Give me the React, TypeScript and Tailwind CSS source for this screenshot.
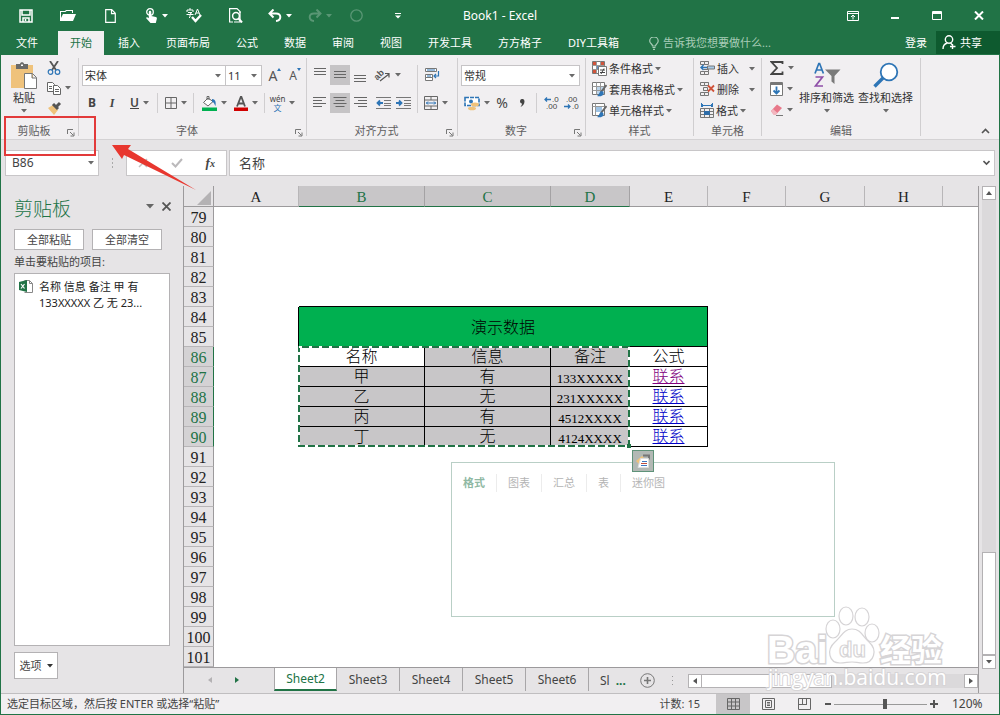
import { useState } from "react";
import type { ReactNode } from "react";

const menuTabs = ["文件", "开始", "插入", "页面布局", "公式", "数据", "审阅", "视图", "开发工具", "方方格子", "DIY工具箱"];
const sheets = ["Sheet2", "Sheet3", "Sheet4", "Sheet5", "Sheet6"];
const columns = ["A", "B", "C", "D", "E", "F", "G", "H", ""];

interface Record {
  name: string;
  info: string;
  remark: string;
  link: string;
}

const records: Record[] = [
  { name: "名称", info: "信息", remark: "备注", link: "公式" },
  { name: "甲", info: "有", remark: "133XXXXX", link: "联系" },
  { name: "乙", info: "无", remark: "231XXXXX", link: "联系" },
  { name: "丙", info: "有", remark: "4512XXXX", link: "联系" },
  { name: "丁", info: "无", remark: "4124XXXX", link: "联系" },
];

const FIRST_ROW = 79;
const LAST_ROW = 101;
const TITLE_ROW = 84;
const DATA_ROW = 86;

function Caret({ className = "text-[#6a6a6a]" }: { className?: string }) {
  return (
    <svg width="6" height="4" viewBox="0 0 6 4" className={`shrink-0 ${className}`}>
      <path d="M0 0h6L3 3.5z" fill="currentColor" />
    </svg>
  );
}

function Separator() {
  return <span className="w-px h-5 bg-[#d0ced0] shrink-0" />;
}

interface ToolProps {
  label: string;
  children: ReactNode;
  caret?: boolean;
  active?: boolean;
  width?: string;
  className?: string;
}

function Tool({ label, children, caret, active, width = caret ? "w-[35px]" : "w-5", className = "" }: ToolProps) {
  return (
    <button
      type="button"
      aria-label={label}
      className={`min-h-5 flex items-center justify-center gap-1 shrink-0 ${width} ${active ? "bg-[#c6c4c6]" : ""} ${className}`}
    >
      {children}
      {caret && <Caret />}
    </button>
  );
}

function Group({ title, launcher, className, children }: { title: string; launcher?: boolean; className: string; children: ReactNode }) {
  return (
    <section className={`flex flex-col shrink-0 border-r border-[#d0ced0] ${className}`}>
      <div className="flex-1 min-h-0">{children}</div>
      <div className="h-[15px] pt-1 flex items-center text-[#605e60]">
        <span className="flex-1 text-center">{title}</span>
        {launcher && (
          <button type="button" aria-label={`${title}设置`} className="w-[11px] flex justify-start pt-1">
            <svg width="8" height="8" viewBox="0 0 8 8" fill="none" stroke="#777">
              <path d="M.5 5V.5H6M3 3l3.5 3.5M7 3.5V7H3.5" />
            </svg>
          </button>
        )}
      </div>
    </section>
  );
}

function RibbonSelect({ label, value, className }: { label: string; value: string; className: string }) {
  return (
    <div className={`h-[21px] flex items-center bg-white border border-[#c6c4c6] pr-1 ${className}`}>
      <select aria-label={label} className="appearance-none flex-1 min-w-0 pl-[2px] bg-transparent outline-none text-[#333]">
        <option>{value}</option>
      </select>
      <Caret />
    </div>
  );
}

// horizontal text lines, one width per line
function Lines({ widths, align = "center", top = 3 }: { widths: number[]; align?: "left" | "center" | "right"; top?: number }) {
  return (
    <svg width="14" height="14" viewBox="0 0 14 14" stroke="#666">
      {widths.map((w, i) => {
        const x = align === "left" ? 0 : align === "right" ? 14 - w : (14 - w) / 2;
        return <path key={i} d={`M${x} ${top + i * 3 + 0.5}h${w}`} />;
      })}
    </svg>
  );
}

function IndentIcon({ right }: { right?: boolean }) {
  return (
    <svg width="15" height="12" viewBox="0 0 15 12" fill="none">
      <path d="M0 .5h15M8 3.5h7M8 6.5h7M8 8.5h7M0 11.5h15" stroke="#777" />
      {right ? <path d="M0 6h5M3 3.5L5.5 6 3 8.5" stroke="#2e75b6" strokeWidth="1.8" /> : <path d="M1 6h6M4 3.5L1.500 6 4 8.500" stroke="#2e75b6" strokeWidth="1.8" />}
    </svg>
  );
}

function DecimalIcon({ less }: { less?: boolean }) {
  return (
    <svg width="15" height="14" viewBox="0 0 15 14" fontFamily="Liberation Sans" fontSize="8" fill="#444">
      <text x={less ? 2 : 8} y="6">{less ? ".00" : ".0"}</text>
      <text x={less ? 8 : 2} y="13">{less ? ".0" : ".00"}</text>
      {less ? (
        <path d="M0 10.500h6M4 8.500l2 2-2 2" fill="none" stroke="#2e75b6" strokeWidth="1.300" />
      ) : (
        <path d="M7 3.500H1M3 1.500l-2 2 2 2" fill="none" stroke="#2e75b6" strokeWidth="1.300" />
      )}
    </svg>
  );
}

function StyleIcon({ kind }: { kind: "cond" | "table" | "cell" }) {
  return (
    <svg width="15" height="15" viewBox="0 0 15 15" fill="none">
      <path d="M.5.500h12v12H.5z" fill="#fff" stroke="#777" />
      {kind === "cond" && <path d="M1 1h4v3H1zM1 8h3v4H1zM8 1h4v3H8z" fill="#d0533a" />}
      {kind === "cond" && <path d="M5 4h3v4H5z" fill="#5b8fc9" />}
      {kind === "table" && <path d="M4 4h8v8H4z" fill="#bcd4ea" />}
      {kind === "cell" && <path d="M3 3h7v6H3z" fill="#9fc3e4" />}
      {kind === "cell" ? <path d="M.5 3.500h12M3.500.500v12" stroke="#999" /> : <path d="M4.500.500v12M8.500.500v12M.5 4.500h12M.5 8.500h12" stroke="#999" />}
      {kind === "cond" ? (
        <>
          <path d="M6.500 5.500h8v9h-8z" fill="#fff" stroke="#777" />
          <path d="M8 9h5M8 11.500h5M12 7.500L9 13" stroke="#444" />
        </>
      ) : (
        <>
          <path d="M14.500 3L9 10" stroke="#666" strokeWidth="2" />
          <path d="M10 9c-3 0-2 3-5 5 3 1 7 0 6.500-3.500z" fill="#2e75b6" />
        </>
      )}
    </svg>
  );
}

function CellIcon({ kind }: { kind: "insert" | "delete" | "format" }) {
  if (kind === "format") {
    return (
      <svg width="14" height="15" viewBox="0 0 14 15" fill="none">
        <path d="M1 2.500h12M1.500 0v4M12.500 0v4M3 1L1.500 2.500 3 4M11 1l1.500 1.500L11 4" stroke="#2e75b6" />
        <path d="M.5 5.500h13v9H.5zM4.500 5v9M9.500 5v9M.5 8.500h13M.5 11.500h13" stroke="#777" />
        <path d="M4 8h6v4H4z" fill="#2e6ca8" />
      </svg>
    );
  }
  return (
    <svg width="15" height="15" viewBox="0 0 15 15" fill="none">
      <path d="M.5.500h4v3h-4zM4.500.500h4v3h-4zM.5 10.500h4v3h-4zM4.500 10.500h4v3h-4zM8.500.500V3M3.500 8.500h5v2" stroke="#777" />
      {kind === "insert" ? (
        <>
          <path d="M7.500 5h7v3h-7z" fill="#a9cbe8" stroke="#777" />
          <path d="M7 6.500H1M3.500 4L1 6.500 3.500 9" stroke="#2e75b6" strokeWidth="1.500" />
        </>
      ) : (
        <>
          <path d="M3.500 5.500h4v3h-4z" stroke="#777" />
          <path d="M8 3.500l6 6M14 3.500l-6 6" stroke="#d0533a" strokeWidth="1.800" />
        </>
      )}
    </svg>
  );
}

function TextTool({ icon, label, wide }: { icon: ReactNode; label: string; wide?: boolean }) {
  return (
    <button type="button" className="h-[21px] flex items-center gap-[2px] text-[#333]">
      {icon}
      <span className={`text-left ${wide ? "w-[30px]" : ""}`}>{label}</span>
      <Caret />
    </button>
  );
}

function TitleBar() {
  return (
    <header className="h-[31px] grid grid-cols-[1fr_auto_1fr] items-center bg-[#217346] text-white">
      <div className="flex items-center pl-[5px] [&>button]:h-[30px] [&>button]:w-[42px] [&>button]:flex [&>button]:items-center [&>button]:justify-center [&>button]:gap-1">
        <button type="button" aria-label="保存">
          <svg width="14" height="14" viewBox="0 0 14 14" fill="none" stroke="#fff" strokeWidth="1.500">
            <path d="M1 1h12v12H1z" />
            <path d="M3 1v5h8V1" />
            <path d="M4 13V9h6v4M6.500 10v2" />
          </svg>
        </button>
        <button type="button" aria-label="打开">
          <svg width="16" height="13" viewBox="0 0 16 13" fill="#fff">
            <path d="M0 11V2h5l1-1h7v3h-1V2H6.500l-1 1H1v6l2-4h13l-3 7H0z" />
          </svg>
        </button>
        <button type="button" aria-label="新建">
          <svg width="11" height="14" viewBox="0 0 11 14" fill="none" stroke="#fff" strokeWidth="1.200">
            <path d="M.7.700h6l3.600 3.600v9H.7zM6.500.700v4h4" />
          </svg>
        </button>
        <button type="button" aria-label="触摸/鼠标模式" className="pl-2">
          <svg width="13" height="15" viewBox="0 0 13 15" fill="none">
            <circle cx="5" cy="4" r="3.300" stroke="#fff" strokeWidth="1.300" />
            <path d="M3.800 4c0-1.600 2.500-1.600 2.500 0v4l4.500 1c1 .300 1.300 1 1 2l-1 4H5.500L1 10c.5-1 1.500-1 2.800.300z" fill="#fff" />
          </svg>
          <Caret className="text-white" />
        </button>
        <button type="button" aria-label="拼写检查">
          <svg width="16" height="15" viewBox="0 0 16 15" fill="none">
            <path d="M4 0v2M1 4V2h6v2M2 4.500h4L4 6v3M.5 6.500h7M3 9.500h1" stroke="#fff" />
            <path d="M9 7l2.500-6L14 7M10 5h3" stroke="#fff" />
            <path d="M6 9l3.500 4L15 7" stroke="#fff" strokeWidth="2.400" />
          </svg>
        </button>
        <button type="button" aria-label="打印预览">
          <svg width="14" height="15" viewBox="0 0 14 15" fill="none" stroke="#fff" strokeWidth="1.200">
            <path d="M4 14H.6V.600H8L11 3.500V5" />
            <circle cx="7" cy="8" r="3.400" strokeWidth="1.500" />
            <path d="M9.500 10.500L13 14.500" strokeWidth="2" />
            <path d="M11 3.500V14H5" />
          </svg>
        </button>
        <button type="button" aria-label="撤消" className="pl-1">
          <svg width="14" height="13" viewBox="0 0 14 13" fill="none" stroke="#fff" strokeWidth="2">
            <path d="M5.500.500L1.500 4.500l4 4M2 4.500h6c6 0 5.500 7 0 7.500" />
          </svg>
          <Caret className="text-white" />
        </button>
        <button type="button" aria-label="恢复" className="opacity-25">
          <svg width="14" height="13" viewBox="0 0 14 13" fill="none" stroke="#fff" strokeWidth="2">
            <path d="M8.500.500l4 4-4 4M12 4.500H6c-6 0-5.500 7 0 7.500" />
          </svg>
          <Caret className="text-white" />
        </button>
        <button type="button" aria-label="录制" className="opacity-25 pr-3">
          <svg width="13" height="13" viewBox="0 0 13 13" fill="none" stroke="#fff" strokeWidth="1.300">
            <circle cx="6.500" cy="6.500" r="5.700" />
          </svg>
        </button>
        <button type="button" aria-label="自定义快速访问工具栏" className="pr-3">
          <svg width="6" height="6" viewBox="0 0 6 6" fill="#fff">
            <path d="M0 0h6v1H0zM0 2.500h6L3 5.500z" />
          </svg>
        </button>
      </div>
      <h1 className="text-[12px] leading-4">Book1 - Excel</h1>
      <div className="flex justify-end [&>button]:w-[42px] [&>button]:h-[30px] [&>button]:flex [&>button]:items-center [&>button]:justify-center">
        <button type="button" aria-label="功能区显示选项">
          <svg width="12" height="10" viewBox="0 0 12 10" fill="none" stroke="#fff">
            <path d="M.5.500h11v9H.5zM.5 2.500h11M6 8.500V4.500M4 6l2-2 2 2" />
          </svg>
        </button>
        <button type="button" aria-label="最小化">
          <svg width="8" height="10" viewBox="0 0 8 10"><path d="M0 6h8v2H0z" fill="#fff" /></svg>
        </button>
        <button type="button" aria-label="最大化">
          <svg width="10" height="9" viewBox="0 0 10 9" fill="none" stroke="#fff"><path d="M.5.500h9v8h-9zM0 1.500h10M0 2.500h10" /></svg>
        </button>
        <button type="button" aria-label="关闭">
          <svg width="10" height="9" viewBox="0 0 10 9" stroke="#fff" strokeWidth="2"><path d="M1 .5l8 8M9 .5l-8 8" /></svg>
        </button>
      </div>
    </header>
  );
}

function MenuBar() {
  const [tab, setTab] = useState<string>("开始");
  return (
    <nav className="h-6 flex items-stretch bg-[#217346] text-white pl-1">
      <div className="flex gap-[2px]">
        {menuTabs.map((name) => (
          <button
            key={name}
            type="button"
            onClick={() => setTab(name)}
            className={`px-3 pb-px whitespace-nowrap first:mr-[6px] ${tab === name ? "bg-[#f1eff1] text-[#217346]" : ""}`}
          >
            {name}
          </button>
        ))}
      </div>
      <label className="flex items-center gap-1 pl-[18px] flex-1 min-w-0 text-[#a9cdb8]">
        <svg width="10" height="13" viewBox="0 0 10 13" fill="none" stroke="currentColor" strokeWidth="1.200">
          <path d="M3.500 9c0-2-2.800-2.500-2.800-5a4.200 4 0 0 1 8.500 0c0 2.500-2.700 3-2.700 5zM3.500 10.500h3M4 12.400h2" />
        </svg>
        <input aria-label="告诉我" placeholder="告诉我您想要做什么..." className="flex-1 min-w-0 bg-transparent outline-none placeholder:text-[#a9cdb8] placeholder:opacity-100" />
      </label>
      <button type="button" className="px-[9px] pb-px">登录</button>
      <button type="button" className="w-[64px] h-[23px] flex items-center gap-1 pl-[6px] bg-[#0e5a2f]">
        <svg width="14" height="15" viewBox="0 0 14 15" fill="none" stroke="#fff" strokeWidth="1.400">
          <circle cx="7" cy="4.500" r="3.700" />
          <path d="M1 14c0-4 2-5.500 4.500-6M8.500 8l1.500 1.500M10.500 9v5M8 11.500h5.500" />
        </svg>
        共享
      </button>
    </nav>
  );
}

function Ribbon() {
  return (
    <div className="h-[85px] py-[3px] flex bg-[#f1eff1] border-b border-[#d4d2d4]">
      <Group title="剪贴板" launcher className="w-[78px]">
        <div className="flex pl-2">
          <button type="button" className="w-[30px] flex flex-col items-center pt-1 text-[#333]">
            <svg width="28" height="28" viewBox="0 0 28 28" className="shrink-0">
              <path d="M1 3h22v23H1z" fill="#efc27b" />
              <path d="M6 2h4c0-2.500 4-2.500 4 0h4v5H6z" fill="#6a6a6a" />
              <path d="M11 2.500h2v1.500h-2z" fill="#fff" />
              <path d="M14.500 11.500h8l4 4v11h-12zM22 11.500V16h4.500" fill="#fff" stroke="#777" />
            </svg>
            <span className="leading-4 whitespace-nowrap">粘贴</span>
            <span className="pt-[3px]"><Caret /></span>
          </button>
          <div className="flex flex-col pl-[5px]">
            <Tool label="剪切">
              <svg width="14" height="14" viewBox="0 0 14 14" fill="none">
                <path d="M3 0l6 9M11 0L5 9" stroke="#555" strokeWidth="1.800" />
                <circle cx="3.500" cy="11" r="2.300" stroke="#2e75b6" strokeWidth="1.200" />
                <circle cx="10.500" cy="11" r="2.300" stroke="#2e75b6" strokeWidth="1.200" />
              </svg>
            </Tool>
            <Tool label="复制" caret width="w-[30px]">
              <svg width="14" height="13" viewBox="0 0 14 13" fill="#fff" stroke="#666" className="shrink-0">
                <path d="M.5.500h5l2 2v7h-7zM2 4.500h3M2 6.500h3" />
                <path d="M6.500 3.500h4l3 3v6h-7zM8 7.500h4M8 9.500h4" />
              </svg>
            </Tool>
            <Tool label="格式刷">
              <svg width="15" height="14" viewBox="0 0 15 14">
                <path d="M1 7l5-3 5 5-4 5z" fill="#efc27b" />
                <path d="M6 3l5 5M9 6l4-4" stroke="#555" strokeWidth="3" />
              </svg>
            </Tool>
          </div>
        </div>
      </Group>

      <Group title="字体" launcher className="w-[228px]">
        <div className="flex flex-col gap-[7px] pt-[7px] pl-[3px]">
          <div className="flex items-center">
            <RibbonSelect label="字体" value="宋体" className="w-[144px]" />
            <RibbonSelect label="字号" value="11" className="w-[37px] -ml-px" />
            <Tool label="增大字号" className="ml-[3px]">
              <span className="text-[14px] leading-5 text-[#555]">A</span>
              <svg width="4" height="3" viewBox="0 0 4 3" className="-ml-1 mb-3"><path d="M0 3h4L2 0z" fill="#2e75b6" /></svg>
            </Tool>
            <Tool label="减小字号">
              <span className="text-[12px] leading-5 text-[#555]">A</span>
              <svg width="4" height="3" viewBox="0 0 4 3" className="-ml-1 mb-3"><path d="M0 0h4L2 3z" fill="#2e75b6" /></svg>
            </Tool>
          </div>
          <div className="flex items-center text-[12px] text-[#444]">
            <Tool label="加粗"><b>B</b></Tool>
            <Tool label="倾斜"><i className="font-['Liberation_Serif',serif] font-bold">I</i></Tool>
            <Tool label="下划线" caret><span className="underline font-semibold">U</span></Tool>
            <Separator />
            <Tool label="边框" caret>
              <svg width="12" height="12" viewBox="0 0 12 12" fill="none" stroke="#666"><path d="M.5.500h11v11H.5zM6 0v12M0 6h12" /></svg>
            </Tool>
            <Separator />
            <Tool label="填充颜色" caret className="ml-[3px]">
              <svg width="15" height="15" viewBox="0 0 15 15" fill="none">
                <path d="M6 2L1.500 6.500 6 10l5-4.500zM5 4V.500h2V4" fill="#fff" stroke="#666" />
                <path d="M10 3c4 0 4 4 3.500 7-1-1-1-4-3.500-4z" fill="#2e75b6" />
                <path d="M0 11.500h15V15H0z" fill="#00b050" />
              </svg>
            </Tool>
            <Tool label="字体颜色" caret width="w-7">
              <svg width="14" height="15" viewBox="0 0 14 15" fill="none">
                <path d="M3 10.500L6.800 1h.6L11 10.500M4.500 7.500h5" stroke="#555" strokeWidth="1.800" />
                <path d="M0 11.500h14V15H0z" fill="#d00000" />
              </svg>
            </Tool>
            <span className="pl-1"><span className="block w-px h-5 bg-[#d0ced0]" /></span>
            <Tool label="拼音" caret>
              <span className="flex flex-col items-center text-[8px] leading-[9px]">
                <span>wén</span>
                <span className="text-[#2e75b6]">文</span>
              </span>
            </Tool>
          </div>
        </div>
      </Group>

      <Group title="对齐方式" launcher className="w-[151px]">
        <div className="flex pt-[7px] pl-[3px]">
          <div className="flex flex-col gap-2 pr-1 shrink-0">
            <div className="flex items-center">
              <Tool label="顶端对齐"><Lines widths={[12, 12, 12]} top={0} /></Tool>
              <Tool label="垂直居中" active><Lines widths={[12, 12, 12]} /></Tool>
              <Tool label="底端对齐"><Lines widths={[12, 12, 12]} top={7} /></Tool>
              <Tool label="方向" caret>
                <svg width="16" height="16" viewBox="0 0 16 16" fill="none" className="overflow-visible">
                  <text x="-1" y="10" fontSize="9" fontFamily="Liberation Sans" fontWeight="bold" fill="#555" transform="rotate(-45 5 8)">ab</text>
                  <path d="M5 14l9-7M10 6.500h4v4" stroke="#555" strokeWidth="1.200" />
                </svg>
              </Tool>
            </div>
            <div className="flex items-center">
              <Tool label="左对齐"><Lines widths={[13, 9, 13, 9]} align="left" top={1} /></Tool>
              <Tool label="居中" active><Lines widths={[13, 9, 13, 9]} top={1} /></Tool>
              <Tool label="右对齐"><Lines widths={[13, 9, 13, 9]} align="right" top={1} /></Tool>
              <Tool label="减少缩进量" className="ml-[3px]"><IndentIcon /></Tool>
              <Tool label="增加缩进量"><IndentIcon right /></Tool>
            </div>
          </div>
          <span className="w-px h-12 shrink-0 bg-[#d0ced0]" />
          <div className="flex flex-col gap-2 pl-1">
            <Tool label="自动换行">
              <svg width="15" height="14" viewBox="0 0 15 14" fill="none">
                <path d="M.5.500h11v3H.5zM.5 6.500h7v3h-7zM.5 9.500h7v3h-7z" fill="#fff" stroke="#777" />
                <path d="M2 2h8M2 8h4" stroke="#2e75b6" />
                <path d="M13.500 3v5H9M11 6L9 8l2 2" stroke="#2e75b6" strokeWidth="1.200" />
              </svg>
            </Tool>
            <Tool label="合并后居中" caret width="w-7">
              <svg width="14" height="14" viewBox="0 0 14 14" fill="none">
                <path d="M.5.500h13v13H.5zM.5 4h13M.5 10h13M7 .500V4M7 10v3.500" stroke="#666" />
                <path d="M2 7h10M4 5.500L2.500 7 4 8.500M10 5.500L11.500 7 10 8.500" stroke="#2e75b6" />
              </svg>
            </Tool>
          </div>
        </div>
      </Group>

      <Group title="数字" launcher className="w-[128px]">
        <div className="flex flex-col gap-[7px] pt-[7px] pl-[3px]">
          <RibbonSelect label="数字格式" value="常规" className="w-[119px]" />
          <div className="flex items-center text-[#444]">
            <Tool label="会计数字格式" caret width="w-[31px]">
              <svg width="16" height="15" viewBox="0 0 16 15" fill="none">
                <path d="M1 1.500h14v8H1z" fill="#fff" stroke="#2e75b6" strokeWidth="1.600" strokeDasharray="4 1" />
                <circle cx="7" cy="5.500" r="2" fill="#2e75b6" />
                <ellipse cx="11" cy="8.500" rx="4" ry="2" fill="#efc27b" />
                <ellipse cx="8" cy="12.500" rx="4" ry="1.800" fill="#efc27b" />
              </svg>
            </Tool>
            <Tool label="百分比样式"><span className="text-[14px] leading-5">%</span></Tool>
            <Tool label="千位分隔样式">
              <svg width="5" height="8" viewBox="0 0 5 8"><path d="M0 2.200a2 2 0 1 1 4.500 0C4.500 5 3 7 .5 8c1-1.500 1.500-2.500 1.400-3.600C.6 4.300 0 3.300 0 2.200z" fill="#444" /></svg>
            </Tool>
            <span className="px-1"><span className="block w-px h-5 bg-[#d0ced0]" /></span>
            <Tool label="增加小数位数"><DecimalIcon /></Tool>
            <Tool label="减少小数位数"><DecimalIcon less /></Tool>
          </div>
        </div>
      </Group>

      <Group title="样式" className="w-[108px]">
        <div className="flex flex-col items-start pl-[6px]">
          <TextTool icon={<StyleIcon kind="cond" />} label="条件格式" />
          <TextTool icon={<StyleIcon kind="table" />} label="套用表格格式" />
          <TextTool icon={<StyleIcon kind="cell" />} label="单元格样式" />
        </div>
      </Group>

      <Group title="单元格" className="w-[68px]">
        <div className="flex flex-col items-start pl-[6px]">
          <TextTool icon={<CellIcon kind="insert" />} label="插入" wide />
          <TextTool icon={<CellIcon kind="delete" />} label="删除" wide />
          <TextTool icon={<CellIcon kind="format" />} label="格式" />
        </div>
      </Group>

      <Group title="编辑" className="w-[159px]">
        <div className="flex text-[#333]">
          <div className="flex flex-col gap-px pl-1 shrink-0">
            <Tool label="自动求和" caret width="w-[31px]">
              <svg width="14" height="14" viewBox="0 0 14 14" fill="none"><path d="M12.500 3V1H1.500l5.500 6-5.500 6h11v-2.500" stroke="#444" strokeWidth="1.800" /></svg>
            </Tool>
            <Tool label="填充" caret width="w-[31px]">
              <svg width="13" height="14" viewBox="0 0 13 14" fill="none">
                <path d="M.5.500h12v13H.5z" fill="#fff" stroke="#777" />
                <path d="M1 1h11v2H1z" fill="#777" />
                <path d="M6.500 4.500v7M3.500 8.500l3 3 3-3" stroke="#2e75b6" strokeWidth="1.800" />
              </svg>
            </Tool>
            <Tool label="清除" caret width="w-[31px]">
              <svg width="13" height="12" viewBox="0 0 13 12">
                <path d="M1 7l6-6.500L12 4l-6 6.500H3.500z" fill="#e8788a" />
                <path d="M1 7l2-2 4.500 4L6 10.500H3.500z" fill="#f3b6bf" />
                <path d="M6 11.500h7" stroke="#777" />
              </svg>
            </Tool>
          </div>
          <button type="button" className="w-[59px] flex flex-col items-center pt-1">
            <svg width="28" height="28" viewBox="0 0 28 28" fill="none">
              <path d="M2 11.500L5.800 1.500h.8l3.800 10M3.500 8h5.500" stroke="#2e75b6" strokeWidth="1.700" />
              <path d="M2.500 15h7l-7 9h7.500" stroke="#8e4fa8" strokeWidth="1.700" />
              <path d="M12 7.500h15.500l-6 6.500v8l-3-2.500V14z" fill="#7a7a7a" />
            </svg>
            <span className="leading-4 whitespace-nowrap">排序和筛选</span>
            <span className="pt-[3px]"><Caret /></span>
          </button>
          <button type="button" className="w-[59px] flex flex-col items-center pt-1">
            <svg width="28" height="28" viewBox="0 0 28 28" fill="none">
              <circle cx="17" cy="10" r="8.300" fill="#fff" stroke="#2e75b6" strokeWidth="1.800" />
              <path d="M11 16L2.500 24.500" stroke="#2e75b6" strokeWidth="3.400" />
            </svg>
            <span className="leading-4 whitespace-nowrap">查找和选择</span>
            <span className="pt-[3px]"><Caret /></span>
          </button>
        </div>
      </Group>

      <div className="flex-1 flex items-end justify-end pr-[9px]">
        <button type="button" aria-label="折叠功能区">
          <svg width="9" height="8" viewBox="0 0 9 8" fill="none" stroke="#555" strokeWidth="1.600"><path d="M1 5l3.500-3.500L8 5" /></svg>
        </button>
      </div>
    </div>
  );
}

function FormulaBar() {
  return (
    <div className="h-[46px] flex items-start pt-[10px] pl-1 pr-1 text-[#444]">
      <div className="w-[94px] h-[26px] flex items-center pr-1 bg-white border border-[#c8c6c8]">
        <input aria-label="名称框" defaultValue="B86" className="flex-1 min-w-0 pl-[6px] text-[12px] bg-transparent outline-none" />
        <Caret />
      </div>
      <svg width="27" height="26" viewBox="0 0 27 26" fill="#aaa"><path d="M13 8h1v2h-1zM13 12h1v2h-1zM13 16h1v2h-1z" /></svg>
      <div className="w-[101px] h-[26px] flex items-center justify-around bg-white border border-[#c8c6c8]">
        <button type="button" aria-label="取消">
          <svg width="11" height="10" viewBox="0 0 11 10" stroke="#c0bec0" strokeWidth="1.500"><path d="M1 1l8 8M9 1L1 9" /></svg>
        </button>
        <button type="button" aria-label="输入">
          <svg width="12" height="10" viewBox="0 0 12 10" fill="none" stroke="#bbb9bb" strokeWidth="2"><path d="M1 5l3.500 3.500L11 1" /></svg>
        </button>
        <button type="button" aria-label="插入函数" className="font-['Liberation_Serif',serif] italic font-bold text-[13px]">
          f<span className="text-[10px]">x</span>
        </button>
      </div>
      <div className="ml-[2px] flex-1 h-[26px] flex items-center pr-1 bg-white border border-[#c8c6c8]">
        <input aria-label="编辑栏" defaultValue="名称" className="flex-1 min-w-0 pl-[9px] text-[13px] bg-transparent outline-none" />
        <svg width="7" height="6" viewBox="0 0 7 6" fill="none" stroke="#555" strokeWidth="1.600"><path d="M.5 1l3 3 3-3" /></svg>
      </div>
    </div>
  );
}

function ClipboardPane() {
  return (
    <aside className="w-[182px] shrink-0 flex flex-col items-start pl-[13px] pb-[14px] text-[#444]">
      <div className="w-full h-[43px] pt-[2px] flex items-center pr-3">
        <h2 className="flex-1 text-[19px] leading-7 text-[#217346] font-light">剪贴板</h2>
        <button type="button" aria-label="任务窗格选项" className="pr-2 pb-1">
          <svg width="8" height="5" viewBox="0 0 8 5"><path d="M0 0h8L4 4.500z" fill="#666" /></svg>
        </button>
        <button type="button" aria-label="关闭窗格" className="pb-1">
          <svg width="9" height="9" viewBox="0 0 9 9" stroke="#555" strokeWidth="1.800"><path d="M.5.500l8 8M8.500.500l-8 8" /></svg>
        </button>
      </div>
      <div className="flex gap-2">
        <button type="button" className="w-[70px] h-[21px] bg-white border border-[#b4b2b4]">全部粘贴</button>
        <button type="button" className="w-[70px] h-[21px] bg-white border border-[#b4b2b4]">全部清空</button>
      </div>
      <p className="h-[23px] leading-[23px]">单击要粘贴的项目:</p>
      <ul className="w-[156px] flex-1 bg-white border border-[#b4b2b4] text-[#222]">
        <li className="flex gap-1 pl-1 pt-[5px]">
          <svg width="16" height="15" viewBox="0 0 16 15" fill="none" className="shrink-0">
            <path d="M5.500 1.500h5l3 3v9h-8" fill="#fff" stroke="#888" />
            <path d="M10.500 1.500v3h3" stroke="#888" />
            <path d="M0 3l8-2v12l-8-2z" fill="#217346" />
            <path d="M2 5l3.500 4.500M5.500 5L2 9.500" stroke="#fff" strokeWidth="1.200" />
          </svg>
          <p className="leading-4">名称 信息 备注 甲 有<br />133XXXXX 乙 无 23...</p>
        </li>
      </ul>
      <button type="button" className="mt-[6px] w-[44px] h-[27px] flex items-center justify-center gap-[5px] bg-white border border-[#b4b2b4]">
        选项
        <Caret className="text-[#333]" />
      </button>
    </aside>
  );
}

function RowHeader({ row }: { row: number }) {
  const picked = row >= DATA_ROW && row < DATA_ROW + records.length;
  return (
    <th
      scope="row"
      className={`p-0 pt-[3px] font-normal text-[16px] leading-4 font-['Liberation_Serif',serif] border-b border-b-[#b8b6b8] border-r ${picked ? "bg-[#d4d2d4] text-[#217346] border-r-[#217346]" : "bg-[#e6e4e6] text-[#222] border-r-[#9c9a9c]"}`}
    >
      {row}
    </th>
  );
}

function DataCells({ index }: { index: number }) {
  const { name, info, remark, link } = records[index];
  const cell = "p-0 pt-1 border-b border-r border-black text-center leading-[15px]";
  return (
    <>
      <td className="p-0 border-r border-black" />
      <td className={`${cell} ${index === 0 ? "" : "bg-[#c8c6c8]"}`}>{name}</td>
      <td className={`${cell} bg-[#c8c6c8]`}>{info}</td>
      <td className={`${cell} bg-[#c8c6c8] ${index > 0 ? "text-[13px] font-['Liberation_Serif',serif]" : ""}`}>{remark}</td>
      <td className={cell}>
        {index === 0 ? link : <a href="#contact" className={`underline ${index === 1 ? "text-[#800080]" : "text-[#0000c8]"}`}>{link}</a>}
      </td>
      <td colSpan={4} />
    </>
  );
}

function Grid() {
  const rows: number[] = [];
  for (let r = FIRST_ROW; r <= LAST_ROW; r++) rows.push(r);

  return (
    <div className="relative flex-1 overflow-hidden border-b border-[#9c9a9c]">
      <table className="w-full table-fixed border-separate border-spacing-0 bg-white text-black text-[16px] font-['Liberation_Mono','Noto_Sans_CJK_SC',monospace] font-light">
        <colgroup>
          <col className="w-[30px]" />
          <col className="w-[85px]" />
          <col className="w-[126px]" />
          <col className="w-[126px]" />
          <col className="w-[79px]" />
          <col className="w-[78px]" />
          <col className="w-[78px]" />
          <col className="w-[79px]" />
          <col className="w-[78px]" />
          <col />
        </colgroup>
        <thead>
          <tr className="h-[21px] bg-[#e6e4e6]">
            <th aria-label="全选" className="p-0 border-b border-r border-[#9c9a9c]">
              <svg width="14" height="14" viewBox="0 0 14 14" className="ml-auto mr-[2px] mt-1"><path d="M14 0v14H0z" fill="#b4b2b4" /></svg>
            </th>
            {columns.map((c, i) => {
              const picked = c === "B" || c === "C" || c === "D";
              return (
                <th
                  key={i}
                  scope="col"
                  className={`p-0 pt-[2px] font-normal text-[15px] leading-[18px] font-['Liberation_Serif',serif] border-b last:border-r-0 border-r ${picked ? "bg-[#c8c6c8] text-[#217346] border-r-[#a4a2a4] border-b-[#217346]" : "text-[#222] border-r-[#b8b6b8] border-b-[#9c9a9c]"}`}
                >
                  {c}
                </th>
              );
            })}
          </tr>
        </thead>
        <tbody>
          {rows.map((r) => {
            const index = r - DATA_ROW;
            return (
              <tr key={r} className="h-5">
                <RowHeader row={r} />
                {r === TITLE_ROW - 1 && (
                  <>
                    <td />
                    <td colSpan={4} className="p-0 border-b border-black" />
                    <td colSpan={4} />
                  </>
                )}
                {r === TITLE_ROW && (
                  <>
                    <td className="p-0 border-r border-black" />
                    <td colSpan={4} rowSpan={2} className="p-0 pt-1 leading-5 text-center bg-[#00b050] border-b border-r border-black">演示数据</td>
                    <td colSpan={4} />
                  </>
                )}
                {r === TITLE_ROW + 1 && (
                  <>
                    <td className="p-0 border-r border-black" />
                    <td colSpan={4} />
                  </>
                )}
                {index >= 0 && index < records.length && <DataCells index={index} />}
                {(r < TITLE_ROW - 1 || index >= records.length) && <td colSpan={9} />}
              </tr>
            );
          })}
        </tbody>
      </table>

      {/* copied range outline */}
      <svg width="334" height="104" viewBox="0 0 334 104" fill="none" className="absolute left-[114px] top-[159px] pointer-events-none">
        <path d="M1 2h330v99H1z" stroke="#217346" strokeWidth="2" />
        <path d="M1 2h330v99H1z" stroke="#fff" strokeWidth="2" strokeDasharray="3 7" />
        <path d="M329 99h4v4h-4z" fill="#217346" />
      </svg>

      <div className="absolute left-[267px] top-[276px] w-[384px] h-[155px] border border-[#b9cfc6] bg-white/60 flex items-start pt-[11px]">
        {["格式", "图表", "汇总", "表", "迷你图"].map((t, i) => (
          <button
            key={t}
            type="button"
            className={`px-[11px] h-[18px] border-r border-[#ececec] last:border-0 ${i === 0 ? "text-[#8fb8a3] font-bold" : "text-[#b4b4b4]"}`}
          >
            {t}
          </button>
        ))}
      </div>
      <button type="button" aria-label="快速分析" className="absolute left-[448px] top-[264px] w-[22px] h-[22px] flex items-center justify-center bg-[#b2b8b4] border border-[#5f9279]">
        <svg width="16" height="16" viewBox="0 0 16 16" fill="none">
          <path d="M8 2.500h6v4" stroke="#777" strokeWidth="2" />
          <path d="M1 8l6-5 2 2-5 6z" fill="#efc27b" />
          <path d="M5.500 5.500h8v9h-10.500z" fill="#fff" stroke="#ddd" />
          <path d="M7 8.500h5" stroke="#3d78c0" />
          <path d="M6 10.500h6" stroke="#c05040" />
          <path d="M6 12.500h6" stroke="#3d78c0" />
        </svg>
      </button>
    </div>
  );
}

function SheetTabs() {
  const [sheet, setSheet] = useState<string>("Sheet2");
  return (
    <div className="h-[25px] flex items-start text-[12px] text-[#444]">
      <div className="w-[90px] h-6 flex items-center pl-6 gap-[23px]">
        <button type="button" aria-label="上一个工作表"><svg width="4" height="6" viewBox="0 0 4 6"><path d="M4 0v6L0 3z" fill="#b4b2b4" /></svg></button>
        <button type="button" aria-label="下一个工作表"><svg width="4" height="6" viewBox="0 0 4 6"><path d="M0 0v6l4-3z" fill="#217346" /></svg></button>
      </div>
      {sheets.map((s) => (
        <button
          key={s}
          type="button"
          onClick={() => setSheet(s)}
          className={`w-[63px] shrink-0 border-r border-[#a8a6a8] text-center ${s === sheet ? "h-[23px] bg-white text-[#217346] border-l border-b-2 border-b-[#217346]" : "h-[23px]"}`}
        >
          {s}
        </button>
      ))}
      <div className="h-[25px] w-[66px] shrink-0 flex items-center pl-[11px]">
        <button type="button">Sl</button>
        <button type="button" aria-label="更多工作表" className="pl-[6px] font-bold text-[#217346]">...</button>
        <button type="button" aria-label="新工作表" className="ml-auto">
          <svg width="15" height="15" viewBox="0 0 15 15" fill="none" stroke="#777">
            <circle cx="7.500" cy="7.500" r="6.800" />
            <path d="M7.500 4v7M4 7.500h7" strokeWidth="1.600" />
          </svg>
        </button>
      </div>
      <svg width="33" height="24" viewBox="0 0 33 24" fill="#999" className="shrink-0"><path d="M17 8h1v1h-1zM17 12h1v1h-1zM17 16h1v1h-1z" /></svg>
      <div className="flex-1 mt-[6px] h-[14px] flex bg-[#dbd9db]">
        <button type="button" aria-label="向左滚动" className="w-[14px] bg-white border border-[#b4b2b4] flex items-center justify-center">
          <svg width="4" height="6" viewBox="0 0 4 6"><path d="M4 0v6L0 3z" fill="#555" /></svg>
        </button>
        <div className="w-[45%] -ml-px bg-white border border-[#b4b2b4]" />
        <button type="button" aria-label="向右滚动" className="ml-auto w-[14px] bg-white border border-[#b4b2b4] flex items-center justify-center">
          <svg width="4" height="6" viewBox="0 0 4 6"><path d="M0 0v6l4-3z" fill="#555" /></svg>
        </button>
      </div>
    </div>
  );
}

function VerticalScroll() {
  return (
    <div className="w-5 shrink-0 pl-[3px] pr-[3px] pb-6 flex">
      <div className="flex-1 flex flex-col bg-[#dbd9db]">
        <button type="button" aria-label="向上滚动" className="h-[14px] bg-white border border-[#b4b2b4] flex items-center justify-center">
          <svg width="6" height="4" viewBox="0 0 6 4"><path d="M0 4h6L3 0z" fill="#555" /></svg>
        </button>
        <div className="mt-auto h-[103px] bg-white border border-[#b4b2b4]" />
        <button type="button" aria-label="向下滚动" className="h-[14px] bg-white border border-[#b4b2b4] flex items-center justify-center">
          <Caret className="text-[#555]" />
        </button>
      </div>
    </div>
  );
}

function StatusBar() {
  const [zoom, setZoom] = useState<number>(120);
  return (
    <footer className="h-[21px] flex items-center pl-[6px] bg-[#f1eff1] border-t border-[#c0bec0] text-[#444]">
      <p className="flex-1 whitespace-nowrap">选定目标区域，然后按 ENTER 或选择“粘贴”</p>
      <p className="pr-4">计数: 15</p>
      <button type="button" aria-label="普通" className="w-[34px] h-5 flex items-center justify-center bg-[#c8c6c8]">
        <svg width="13" height="12" viewBox="0 0 13 12" fill="none" stroke="#666"><path d="M.5.500h12v11H.5zM4.500 0v12M8.500 0v12M0 4h13M0 8h13" /></svg>
      </button>
      <button type="button" aria-label="页面布局" className="w-9 h-5 flex items-center justify-center">
        <svg width="13" height="12" viewBox="0 0 13 12" fill="none" stroke="#666"><path d="M.5.500h12v11H.5zM3.500 2.500h6v7h-6zM5 4.500h3M5 6h3M5 7.500h3" /></svg>
      </button>
      <button type="button" aria-label="分页预览" className="w-9 h-5 flex items-center justify-center">
        <svg width="13" height="12" viewBox="0 0 13 12" fill="none" stroke="#666"><path d="M.5.500h12v11H.5zM4.500 0v6.500M8.500 0v6.500M0 6.500h9" /></svg>
      </button>
      <button type="button" aria-label="缩小" onClick={() => setZoom(zoom - 10)} className="w-3 flex justify-center">
        <svg width="6" height="8" viewBox="0 0 6 8"><path d="M0 3h6v2H0z" fill="#555" /></svg>
      </button>
      <input
        type="range"
        aria-label="显示比例"
        min={0}
        max={220}
        value={zoom}
        onChange={(e) => setZoom(parseInt(e.target.value))}
        className="w-[93px] h-3 appearance-none bg-transparent [&::-webkit-slider-runnable-track]:h-px [&::-webkit-slider-runnable-track]:bg-[#999] [&::-webkit-slider-thumb]:appearance-none [&::-webkit-slider-thumb]:w-1 [&::-webkit-slider-thumb]:h-[10px] [&::-webkit-slider-thumb]:-mt-[5px] [&::-webkit-slider-thumb]:bg-[#555]"
      />
      <button type="button" aria-label="放大" onClick={() => setZoom(zoom + 10)} className="w-[14px] flex justify-center">
        <svg width="8" height="8" viewBox="0 0 8 8"><path d="M0 3h8v2H0zM3 0h2v8H3z" fill="#555" /></svg>
      </button>
      <span className="w-[58px] pl-[11px] text-[12px]">{zoom}%</span>
    </footer>
  );
}

function Watermark() {
  return (
    <svg width="184" height="92" viewBox="0 0 184 92" className="absolute right-[52px] bottom-5 pointer-events-none overflow-visible" fill="#fff" stroke="#d6d4d6" strokeWidth="1.200">
      <text x="3" y="60" fontFamily="Liberation Sans" fontWeight="bold" fontSize="39" strokeWidth="3" paintOrder="stroke">Bai</text>
      <path d="M88 26c9 0 11 8 17 13 9 8 5 21-6 21-5 0-7-1-11-1s-7 1-12 1c-11 0-14-13-5-21 6-5 9-13 17-13z" />
      <ellipse cx="69" cy="26" rx="7" ry="9" />
      <ellipse cx="82" cy="13" rx="7" ry="9" />
      <ellipse cx="98" cy="14" rx="7" ry="9" />
      <ellipse cx="108" cy="30" rx="7" ry="9" />
      <text x="75" y="54" fontFamily="Liberation Sans" fontWeight="bold" fontSize="22">du</text>
      <text x="116" y="58" fontFamily="Noto Sans CJK SC" fontWeight="bold" fontSize="31" strokeWidth="3" paintOrder="stroke">经验</text>
      <text x="4" y="82" fontFamily="Open Sans" fontSize="21" strokeWidth="2" paintOrder="stroke">jingyan.baidu.com</text>
    </svg>
  );
}

export default function App() {
  return (
    <div className="relative min-h-screen flex flex-col bg-[#e6e4e6] font-['Noto_Sans','Noto_Sans_CJK_SC',sans-serif] text-[11px] leading-4 overflow-hidden">
      <TitleBar />
      <MenuBar />
      <div className="flex-1 flex flex-col border-x border-b border-[#217346]">
        <Ribbon />
        <FormulaBar />
        <main className="flex-1 flex">
          <ClipboardPane />
          <div className="flex-1 min-w-0 flex flex-col border-x border-[#9c9a9c]">
            <Grid />
            <SheetTabs />
          </div>
          <VerticalScroll />
        </main>
        <StatusBar />
      </div>
      <Watermark />

      {/* callout on the clipboard launcher */}
      <svg width="200" height="80" viewBox="0 0 200 80" fill="none" className="absolute left-0 top-[115px] pointer-events-none">
        <path d="M5 2h90v38H5z" stroke="#e23a3a" strokeWidth="2" />
        <path d="M112 30h19l-3 4 68 41-72-35-2 4z" fill="#e8372f" />
      </svg>
    </div>
  );
}
